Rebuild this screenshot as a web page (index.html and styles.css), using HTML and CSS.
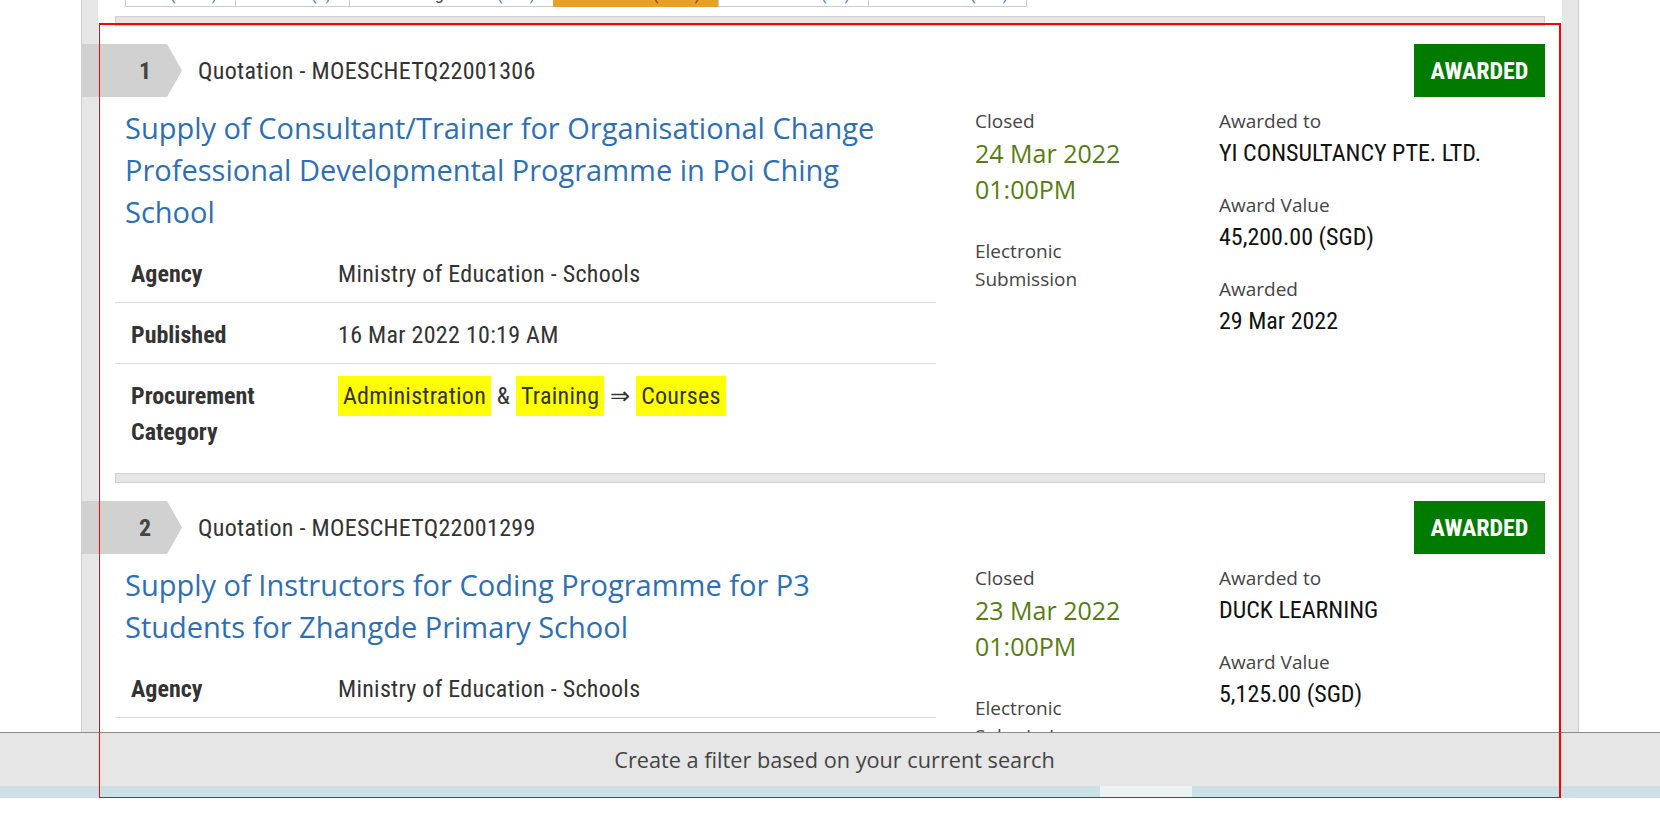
FILE: index.html
```html
<!DOCTYPE html>
<html lang="en">
<head>
<meta charset="utf-8">
<title>Opportunities</title>
<link rel="stylesheet" href="styles.css">
</head>
<body>
<div class="page">
  <div class="content">
    <div class="tabs">
      <div class="tab tab-1"><span class="tl">All <span class="cnt">(2365)</span></span></div>
      <div class="tab tab-2"><span class="tl">Closed <span class="cnt">(0)</span></span></div>
      <div class="tab tab-3"><span class="tl">Pending Award <span class="cnt">(145)</span></span></div>
      <div class="tab tab-4 active"><span class="tl">Awarded <span class="cnt">(1842)</span></span></div>
      <div class="tab tab-5"><span class="tl">Cancelled <span class="cnt">(64)</span></span></div>
      <div class="tab tab-6"><span class="tl">No Award <span class="cnt">(217)</span></span></div>
    </div>

    <div class="sep"></div>

    <div class="item">
      <div class="head">
        <div class="num">1</div>
        <div class="ref">Quotation - MOESCHETQ22001306</div>
        <div class="badge">AWARDED</div>
      </div>
      <div class="body">
        <div class="main">
          <h2 class="title">Supply of Consultant/Trainer for Organisational Change Professional Developmental Programme in Poi Ching School</h2>
          <div class="row"><div class="k">Agency</div><div class="v">Ministry of Education - Schools</div></div>
          <div class="row"><div class="k">Published</div><div class="v">16 Mar 2022 10:19 AM</div></div>
          <div class="row"><div class="k">Procurement Category</div><div class="v"><span class="hl">Administration</span> &amp; <span class="hl">Training</span> &rArr; <span class="hl">Courses</span></div></div>
        </div>
        <div class="mid">
          <div class="lbl">Closed</div>
          <div class="date">24 Mar 2022<br>01:00PM</div>
          <div class="lbl mode">Electronic<br>Submission</div>
        </div>
        <div class="side">
          <div class="lbl">Awarded to</div>
          <div class="val">YI CONSULTANCY PTE. LTD.</div>
          <div class="lbl">Award Value</div>
          <div class="val">45,200.00 (SGD)</div>
          <div class="lbl">Awarded</div>
          <div class="val">29 Mar 2022</div>
        </div>
      </div>
    </div>

    <div class="sep sep-mid"></div>

    <div class="item">
      <div class="head">
        <div class="num">2</div>
        <div class="ref">Quotation - MOESCHETQ22001299</div>
        <div class="badge">AWARDED</div>
      </div>
      <div class="body">
        <div class="main">
          <h2 class="title">Supply of Instructors for Coding Programme for P3 Students for Zhangde Primary School</h2>
          <div class="row"><div class="k">Agency</div><div class="v">Ministry of Education - Schools</div></div>
          <div class="row"><div class="k">Published</div><div class="v">15 Mar 2022 04:52 PM</div></div>
        </div>
        <div class="mid">
          <div class="lbl">Closed</div>
          <div class="date">23 Mar 2022<br>01:00PM</div>
          <div class="lbl mode">Electronic<br>Submission</div>
        </div>
        <div class="side">
          <div class="lbl">Awarded to</div>
          <div class="val">DUCK LEARNING</div>
          <div class="lbl">Award Value</div>
          <div class="val">5,125.00 (SGD)</div>
        </div>
      </div>
    </div>
  </div>
</div>

<div class="footer">
  <div class="filterbar">Create a filter based on your current search</div>
  <div class="strip"></div>
</div>

<div class="highlight-box"></div>
</body>
</html>
```

FILE: styles.css
```css
html, body {
  margin: 0;
  padding: 0;
  height: 100%;
  overflow: hidden;
  background: #fff;
}

body {
  font-family: "Open Sans", sans-serif;
}

.page {
  margin-left: 81px;
  width: 1498px;
  box-sizing: border-box;
  min-height: 100vh;
  border-left: 1px solid #cccccc;
  border-right: 1px solid #cccccc;
  background: #e6e6e6;
  padding: 0 16px;
}

.content {
  background: #fff;
  min-height: 100vh;
  padding: 0 17px;
}

/* tabs (scrolled, only their bottom edge visible) */
.tabs {
  display: flex;
  margin-left: 10px;
  height: 7px;
  overflow: hidden;
}

.tab {
  box-sizing: border-box;
  height: 7px;
  border-left: 1px solid #cccccc;
  border-bottom: 1px solid #cccccc;
  overflow: hidden;
  text-align: right;
  padding-right: 18px;
  font-family: Roboto, "Liberation Sans", sans-serif;
  font-size: 16px;
  line-height: 20px;
  color: #333;
  white-space: nowrap;
}

.tab:last-child {
  border-right: 1px solid #cccccc;
}

.tab .tl {
  display: block;
  margin-top: -15px;
}

.tab .cnt {
  color: #3b7dd8;
}

.tab.active {
  background: #e8a02a;
  border-color: #e8a02a;
}

.tab.active .cnt {
  color: #7a4a10;
}

.tab-1 { width: 110px; }
.tab-2 { width: 114px; }
.tab-3 { width: 204px; }
.tab-4 { width: 165px; }
.tab-5 { width: 150px; }
.tab-6 { width: 159px; }

.sep {
  height: 10px;
  box-sizing: border-box;
  background: #e6e6e6;
  border: 1px solid #d0d0d0;
  margin-top: 9px;
}

.sep-mid {
  margin-top: 0;
}

/* item */
.item {
  padding: 18px 0 13px;
}

.head {
  display: flex;
  align-items: center;
  height: 53px;
}

.num {
  flex: none;
  margin-left: -34px;
  width: 101px;
  height: 53px;
  box-sizing: border-box;
  padding-left: 30px;
  padding-right: 3px;
  background: #d1d1d1;
  clip-path: polygon(0 0, 86px 0, 101px 50%, 86px 100%, 0 100%);
  display: flex;
  align-items: center;
  justify-content: center;
  font-family: "Roboto Condensed", "Liberation Sans Narrow", "Arial Narrow", Roboto, sans-serif;
  font-stretch: condensed;
  font-weight: bold;
  font-size: 24px;
  color: #444;
}

.ref {
  margin-left: 16px;
  font-family: "Roboto Condensed", "Liberation Sans Narrow", "Arial Narrow", Roboto, sans-serif;
  font-stretch: condensed;
  font-size: 24px;
  letter-spacing: 0.3px;
  color: #333;
}

.badge {
  margin-left: auto;
  width: 131px;
  height: 53px;
  background: #007b00;
  color: #fff;
  display: flex;
  align-items: center;
  justify-content: center;
  font-family: "Roboto Condensed", "Liberation Sans Narrow", "Arial Narrow", Roboto, sans-serif;
  font-stretch: condensed;
  font-weight: bold;
  font-size: 24px;
}

.body {
  display: grid;
  grid-template-columns: 821px 1fr 326px;
  margin-top: 10px;
}

.title {
  margin: 0 0 9px;
  padding: 0 31px 0 10px;
  font-family: "Open Sans", sans-serif;
  font-weight: 400;
  font-size: 29px;
  line-height: 42px;
  color: #2d6fb4;
}

.row {
  display: flex;
  padding: 14px 10px 10px 16px;
  border-bottom: 1px solid #dddddd;
  font-family: "Roboto Condensed", "Liberation Sans Narrow", "Arial Narrow", Roboto, sans-serif;
  font-stretch: condensed;
  font-size: 24px;
  line-height: 36px;
  letter-spacing: 0.28px;
  color: #333;
}

.row:last-child {
  border-bottom: none;
}

.row .k {
  flex: none;
  width: 207px;
  box-sizing: border-box;
  padding-right: 12px;
  font-weight: bold;
  letter-spacing: 0;
}

.hl {
  background: #ffff00;
  padding: 6px 5px;
}

.mid {
  padding-left: 39px;
}

.lbl {
  font-family: "Open Sans", sans-serif;
  font-size: 19px;
  line-height: 28px;
  color: #444;
}

.date {
  font-family: "Open Sans", sans-serif;
  font-size: 25px;
  line-height: 36px;
  color: #567d12;
}

.mode {
  margin-top: 30px;
}

.val {
  font-family: "Roboto Condensed", "Liberation Sans Narrow", "Arial Narrow", Roboto, sans-serif;
  font-stretch: condensed;
  font-size: 24px;
  line-height: 36px;
  color: #111;
  margin-bottom: 20px;
}

/* fixed footer bar */
.footer {
  position: fixed;
  left: 0;
  right: 0;
  bottom: 0;
  height: 91px;
  background: #fff;
  border-top: 1px solid #8a8a8a;
  box-sizing: border-box;
}

.filterbar {
  height: 53px;
  box-sizing: border-box;
  padding-left: 9px;
  background: #e6e6e6;
  display: flex;
  align-items: center;
  justify-content: center;
  font-family: "Open Sans", sans-serif;
  font-size: 21.7px;
  color: #444;
}

.strip {
  height: 12px;
  background: linear-gradient(to right, #cde0e5 0, #cde0e5 1100px, #eaf2f4 1100px, #eaf2f4 1192px, #cde0e5 1192px);
}

/* red annotation overlay */
.highlight-box {
  position: fixed;
  left: 99px;
  top: 23px;
  width: 1462px;
  height: 775px;
  box-sizing: border-box;
  border-style: solid;
  border-color: #ff0000;
  border-width: 2px 2px 1px 1px;
  pointer-events: none;
  z-index: 10;
}
```
